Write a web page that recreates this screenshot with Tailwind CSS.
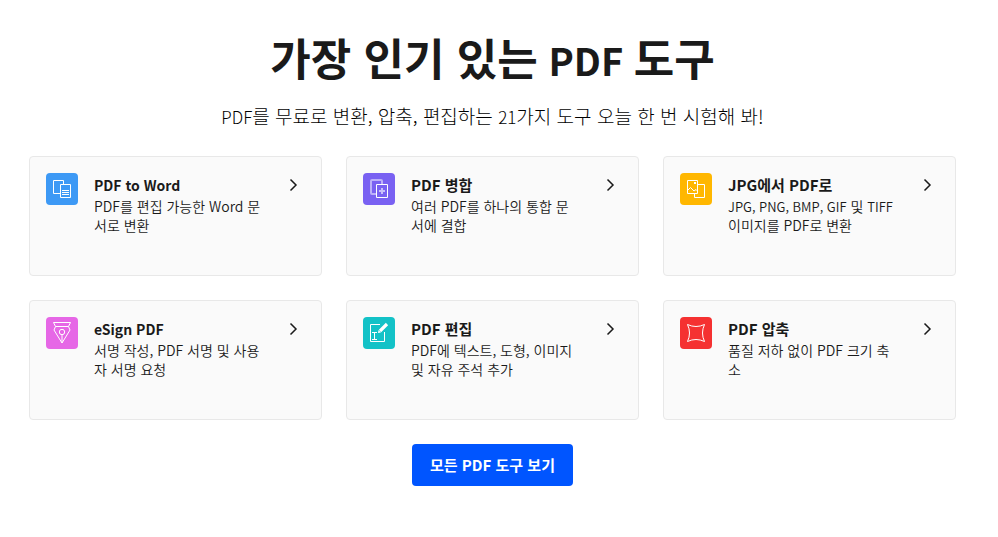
<!doctype html>
<html lang="ko">
<head>
  <meta charset="UTF-8">
  <meta name="viewport" content="width=device-width, initial-scale=1.0">
  <title>가장 인기 있는 PDF 도구</title>
  <script src="https://cdn.jsdelivr.net/npm/@tailwindcss/browser@4"></script>
</head>
<body class="bg-white text-[#1a1a1a] font-['Noto_Sans_CJK_KR',sans-serif]">
  <main class="pl-[29px] pr-[42px] pt-[25px] pb-12 flex flex-col items-center">
    <h1 class="text-[44px] leading-[64px] font-bold text-center">가장 인기 있는<span class="text-[38px]"> PDF </span>도구</h1>
    <p class="mt-2.5 text-[19px] leading-7 font-light text-black text-center"><span class="text-[17px]">PDF</span>를 무료로 변환, 압축, 편집하는 <span class="text-[17px]">21</span>가지 도구 오늘 한 번 시험해 봐!</p>

    <!-- Tools -->
    <div class="w-full mt-[25px] grid grid-cols-3 gap-6">
      <a href="#" class="flex items-start h-30 p-4 bg-[#fafafa] border border-[#e8e8e8] rounded">
        <svg class="size-8 shrink-0" viewBox="0 0 32 32" fill="none" stroke="#fff">
          <rect width="32" height="32" rx="4" fill="#3d99f5" stroke="none"/>
          <path d="M14.5 20.5h-7v-13h10v4M14.5 11.5h10v13h-10zM16 17.5h7M16 19.5h7M16 21.5h7"/>
        </svg>
        <div class="ml-4 flex-1">
          <h2 class="text-sm leading-6 font-bold">PDF to Word</h2>
          <p class="text-sm leading-[19px] font-[350] break-all">PDF를 편집 가능한 Word 문서로 변환</p>
        </div>
        <svg class="ml-7 mt-1 size-4 shrink-0" viewBox="0 0 16 16" fill="none" stroke="#1a1a1a" stroke-width="1.5"><path d="M1.5 2.5L7 8L1.5 13.5"/></svg>
      </a>

      <a href="#" class="flex items-start h-30 p-4 bg-[#fafafa] border border-[#e8e8e8] rounded">
        <svg class="size-8 shrink-0" viewBox="0 0 32 32" fill="none" stroke="#fff">
          <rect width="32" height="32" rx="4" fill="#7961f2" stroke="none"/>
          <path d="M13.5 21H9a1 1 0 0 1-1-1V8a1 1 0 0 1 1-1h9a1 1 0 0 1 1 1v3.5" stroke-opacity=".5" stroke-width="2"/>
          <path d="M13.5 11.5h11v13h-11z"/>
          <path d="M19 15v6M16 18h6" stroke-opacity=".6" stroke-width="2"/>
        </svg>
        <div class="ml-4 flex-1">
          <h2 class="text-[15px] leading-6 font-bold">PDF 병합</h2>
          <p class="text-sm leading-[19px] font-[350] break-all">여러 PDF를 하나의 통합 문서에 결합</p>
        </div>
        <svg class="ml-7 mt-1 size-4 shrink-0" viewBox="0 0 16 16" fill="none" stroke="#1a1a1a" stroke-width="1.5"><path d="M1.5 2.5L7 8L1.5 13.5"/></svg>
      </a>

      <a href="#" class="flex items-start h-30 p-4 bg-[#fafafa] border border-[#e8e8e8] rounded">
        <svg class="size-8 shrink-0" viewBox="0 0 32 32" fill="none" stroke="#fff">
          <rect width="32" height="32" rx="4" fill="#ffb700" stroke="none"/>
          <path d="M7.5 7.5h10v13h-10zM17.5 11.5h7v13h-10v-4"/>
          <path d="M8 17l2.5-2.5L14 18l2-1.5 1.5 1.5"/>
          <rect x="14" y="9" width="2" height="2" fill="#fff" stroke="none"/>
        </svg>
        <div class="ml-4 flex-1">
          <h2 class="text-[15px] leading-6 font-bold">JPG에서 PDF로</h2>
          <p class="text-sm leading-[19px] font-[350]"><span class="text-[13px]">JPG, PNG, BMP, GIF</span> 및 <span class="text-[13px]">TIFF</span> 이미지를 PDF로 변환</p>
        </div>
        <svg class="ml-7 mt-1 size-4 shrink-0" viewBox="0 0 16 16" fill="none" stroke="#1a1a1a" stroke-width="1.5"><path d="M1.5 2.5L7 8L1.5 13.5"/></svg>
      </a>

      <a href="#" class="flex items-start h-30 p-4 bg-[#fafafa] border border-[#e8e8e8] rounded">
        <svg class="size-8 shrink-0" viewBox="0 0 32 32" fill="none" stroke="#fff">
          <rect width="32" height="32" rx="4" fill="#e667e6" stroke="none"/>
          <path d="M7.5 5.5h17l-2 4h-13zM9.5 9.5L8 13l8 13 8-13-1.5-3.5M16 18v8"/>
          <circle cx="16" cy="15" r="2.7"/>
        </svg>
        <div class="ml-4 flex-1">
          <h2 class="text-sm leading-6 font-bold">eSign PDF</h2>
          <p class="text-sm leading-[19px] font-[350] break-all">서명 작성, PDF 서명 및 사용자 서명 요청</p>
        </div>
        <svg class="ml-7 mt-1 size-4 shrink-0" viewBox="0 0 16 16" fill="none" stroke="#1a1a1a" stroke-width="1.5"><path d="M1.5 2.5L7 8L1.5 13.5"/></svg>
      </a>

      <a href="#" class="flex items-start h-30 p-4 bg-[#fafafa] border border-[#e8e8e8] rounded">
        <svg class="size-8 shrink-0" viewBox="0 0 32 32" fill="none" stroke="#fff">
          <rect width="32" height="32" rx="4" fill="#13c2c7" stroke="none"/>
          <path d="M17 7.5H7.5v17h14V15"/>
          <path d="M9 15.5h5M9 22.5h5M11.5 15.500v7"/>
          <path d="M17 14l7-7" stroke-width="3.2"/>
          <path d="M15 16l.5-3 2.5 2.5z" fill="#fff" stroke="none"/>
        </svg>
        <div class="ml-4 flex-1">
          <h2 class="text-[15px] leading-6 font-bold">PDF 편집</h2>
          <p class="text-sm leading-[19px] font-[350]">PDF에 텍스트, 도형, 이미지 및 자유 주석 추가</p>
        </div>
        <svg class="ml-7 mt-1 size-4 shrink-0" viewBox="0 0 16 16" fill="none" stroke="#1a1a1a" stroke-width="1.5"><path d="M1.5 2.5L7 8L1.5 13.5"/></svg>
      </a>

      <a href="#" class="flex items-start h-30 p-4 bg-[#fafafa] border border-[#e8e8e8] rounded">
        <svg class="size-8 shrink-0" viewBox="0 0 32 32" fill="none" stroke="#fff">
          <rect width="32" height="32" rx="4" fill="#f53131" stroke="none"/>
          <path d="M7.5 7.5Q16 11.5 24.5 7.5Q20.5 16 24.5 24.5Q16 20.5 7.5 24.5Q11.5 16 7.5 7.5z"/>
        </svg>
        <div class="ml-4 flex-1">
          <h2 class="text-[15px] leading-6 font-bold">PDF 압축</h2>
          <p class="text-sm leading-[19px] font-[350] break-all">품질 저하 없이 PDF 크기 축소</p>
        </div>
        <svg class="ml-7 mt-1 size-4 shrink-0" viewBox="0 0 16 16" fill="none" stroke="#1a1a1a" stroke-width="1.5"><path d="M1.5 2.5L7 8L1.5 13.5"/></svg>
      </a>
    </div>

    <button type="button" class="mt-6 h-[42px] px-[18px] rounded bg-[#0055ff] text-white text-[15px] font-bold">모든 PDF 도구 보기</button>
  </main>
</body>
</html>
